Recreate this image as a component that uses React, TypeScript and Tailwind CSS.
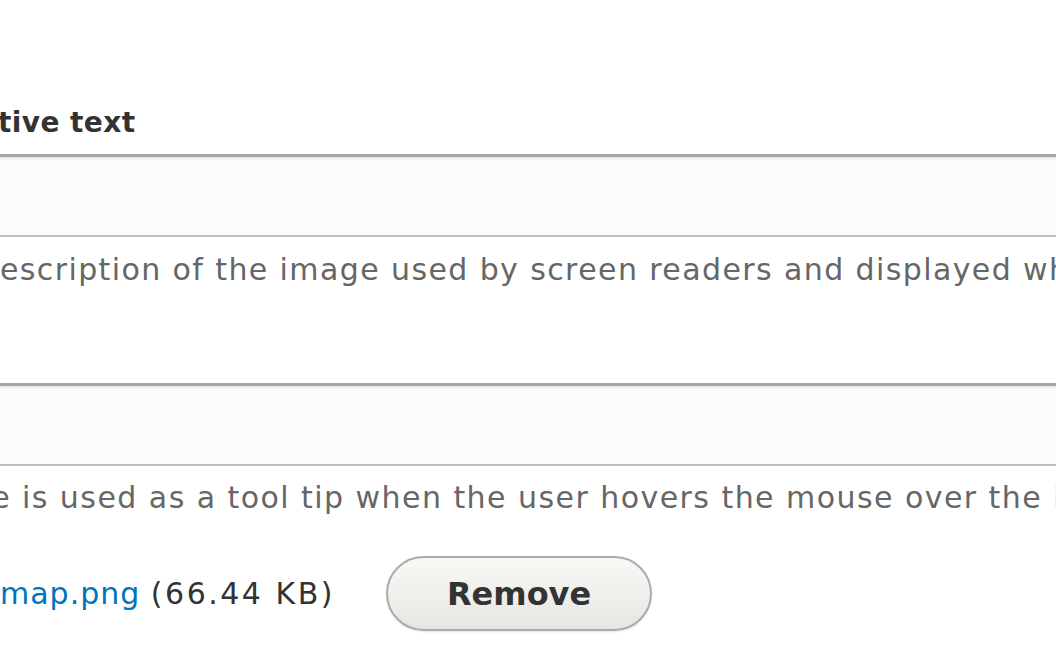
import { FC } from "react";

const font = { fontFamily: '"DejaVu Sans", Verdana, sans-serif' };

const TextInput: FC = () => {
  return (
    <div className="-mx-[20px] h-[83px] border-t-[3px] border-b-2 border-t-[#a6a6a6] border-b-[#bdbdbd] bg-[#fbfbf9] shadow-[inset_0_2px_3px_rgba(0,0,0,0.08)]" />
  );
};

const App: FC = () => {
  return (
    <div
      className="relative h-[657px] w-[1056px] overflow-hidden bg-white"
      style={font}
    >
      <div className="flex flex-col">
        <label className="mt-[106px] -ml-[121px] whitespace-nowrap text-[28px] leading-[34px] font-bold tracking-[0.4px] text-[#333]">
          Alternative text
        </label>
        <div className="mt-[14px]">
          <TextInput />
        </div>
        <p className="mt-[15px] -ml-[119px] whitespace-nowrap text-[30px] leading-[36px] tracking-[1.4px] text-[#666]">
          Short description of the image used by screen readers and displayed
          when the image is not loaded. This is important for accessibility.
        </p>
        <div className="mt-[95px]">
          <TextInput />
        </div>
        <p className="mt-[14px] -ml-[126px] whitespace-nowrap text-[30px] leading-[36px] tracking-[1.45px] text-[#666]">
          The title is used as a tool tip when the user hovers the mouse over
          the image.
        </p>
        <div className="mt-[40px] flex items-center gap-[51px]">
          <span className="whitespace-nowrap text-[30px] tracking-[1px] text-[#333]">
            <a href="#" className="text-[#0074bd]">
              map.png
            </a>{" "}
            <span className="tracking-[2.5px]">(66.44 KB)</span>
          </span>
          <button className="h-[75px] rounded-full border-2 border-[#ababab] bg-gradient-to-b from-[#f8f8f6] to-[#e6e6e1] px-[59px] text-[32px] font-bold text-[#333] shadow-[0_1px_2px_rgba(0,0,0,0.1)]">
            Remove
          </button>
        </div>
      </div>
    </div>
  );
};

export default App;
